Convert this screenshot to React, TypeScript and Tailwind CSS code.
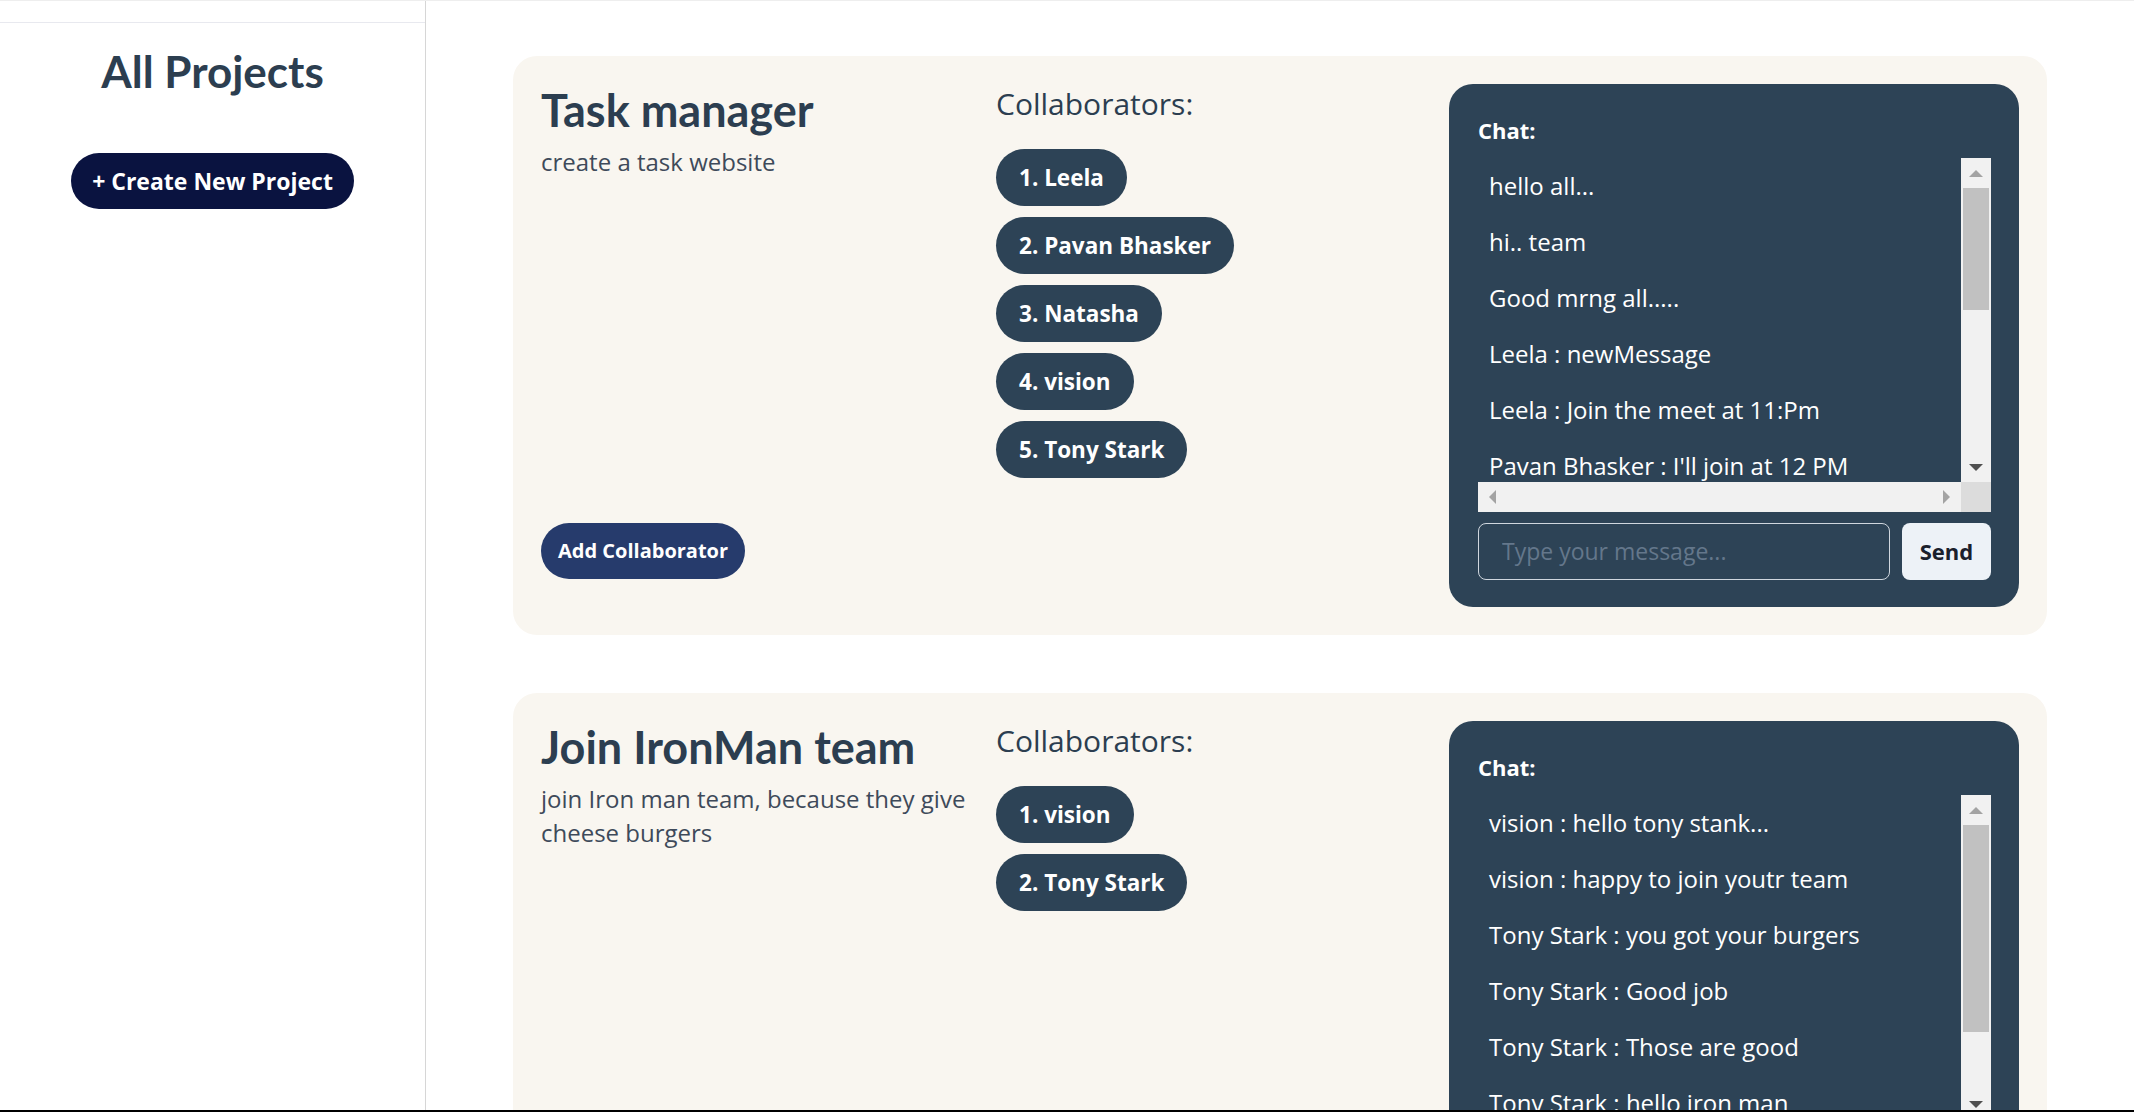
import React from "react";

type Project = {
  title: string;
  desc: string;
  collaborators: string[];
  messages: string[];
  thumbH: number;
};

const projects: Project[] = [
  {
    title: "Task manager",
    desc: "create a task website",
    collaborators: ["Leela", "Pavan Bhasker", "Natasha", "vision", "Tony Stark"],
    messages: [
      "hello all...",
      "hi.. team",
      "Good mrng all.....",
      "Leela : newMessage",
      "Leela : Join the meet at 11:Pm",
      "Pavan Bhasker : I'll join at 12 PM",
      "Natasha : ok",
      "Tony Stark : see you all",
    ],
    thumbH: 122,
  },
  {
    title: "Join IronMan team",
    desc: "join Iron man team, because they give cheese burgers",
    collaborators: ["vision", "Tony Stark"],
    messages: [
      "vision : hello tony stank...",
      "vision : happy to join youtr team",
      "Tony Stark : you got your burgers",
      "Tony Stark : Good job",
      "Tony Stark : Those are good",
      "Tony Stark : hello iron man",
      "vision : thanks",
    ],
    thumbH: 207,
  },
];

function Arrow({ dir, color }: { dir: "up" | "down" | "left" | "right"; color: string }) {
  if (dir === "up")
    return (
      <svg width="14" height="7" viewBox="0 0 14 7">
        <polygon points="7,0 14,7 0,7" fill={color} />
      </svg>
    );
  if (dir === "down")
    return (
      <svg width="14" height="7" viewBox="0 0 14 7">
        <polygon points="0,0 14,0 7,7" fill={color} />
      </svg>
    );
  if (dir === "left")
    return (
      <svg width="7" height="14" viewBox="0 0 7 14">
        <polygon points="7,0 7,14 0,7" fill={color} />
      </svg>
    );
  return (
    <svg width="7" height="14" viewBox="0 0 7 14">
      <polygon points="0,0 7,7 0,14" fill={color} />
    </svg>
  );
}

function ChatBox({ messages, thumbH }: { messages: string[]; thumbH: number }) {
  return (
    <div className="flex w-[570px] shrink-0 flex-col rounded-[24px] bg-[#2d4356] pb-[27px] pl-[29px] pr-[28px] pt-[28px]">
      <div className="mb-[10px] text-[22px] font-bold leading-[36px] text-white">Chat:</div>
      <div className="flex h-[354px] flex-col">
        <div className="flex h-[324px]">
          <div className="min-w-0 flex-1 overflow-hidden">
            {messages.map((m, i) => (
              <div
                key={i}
                className="whitespace-nowrap px-[11px] py-[10px] text-[24px] leading-[36px] text-white"
              >
                {m}
              </div>
            ))}
          </div>
          <div className="flex w-[30px] flex-col bg-[#f1f1f1]">
            <div className="flex h-[30px] items-center justify-center">
              <Arrow dir="up" color="#a3a3a3" />
            </div>
            <div className="flex-1 px-[2px]">
              <div className="bg-[#c1c1c1]" style={{ height: thumbH }} />
            </div>
            <div className="flex h-[30px] items-center justify-center">
              <Arrow dir="down" color="#505050" />
            </div>
          </div>
        </div>
        <div className="flex h-[30px]">
          <div className="flex flex-1 items-center justify-between bg-[#f1f1f1] px-[11px]">
            <Arrow dir="left" color="#a3a3a3" />
            <Arrow dir="right" color="#a3a3a3" />
          </div>
          <div className="w-[30px] bg-[#dcdcdc]" />
        </div>
      </div>
      <div className="mt-[11px] flex h-[57px] gap-[12px]">
        <input
          type="text"
          placeholder="Type your message..."
          className="min-w-0 flex-1 rounded-[8px] border border-[#cfd6de] bg-transparent px-[23px] text-[23px] text-white outline-none placeholder:text-[#64778b]"
        />
        <button className="w-[89px] rounded-[8px] bg-[#edf2f7] text-[22px] font-bold text-[#1a202c]">
          Send
        </button>
      </div>
    </div>
  );
}

function ProjectCard({ p }: { p: Project }) {
  return (
    <div className="flex rounded-[24px] bg-[#f9f6f0] p-[28px]">
      <div className="flex w-[455px] shrink-0 flex-col pr-[10px]">
        <h2 className="font-['Lato',sans-serif] text-[45px] font-bold leading-[53px] text-[#2c3e50]">
          {p.title}
        </h2>
        <p className="mt-[8px] text-[24px] leading-[34px] text-[#3e4a5a]">{p.desc}</p>
        <button className="mb-[28px] mt-auto h-[56px] w-fit rounded-full bg-[#263b6c] px-[17px] text-[20px] font-bold text-white">
          Add Collaborator
        </button>
      </div>
      <div className="min-w-0 flex-1">
        <h3 className="text-[30px] leading-[40px] text-[#2c3e50]">Collaborators:</h3>
        <div className="mt-[25px] flex flex-col items-start gap-[11px]">
          {p.collaborators.map((c, i) => (
            <div
              key={i}
              className="flex h-[57px] items-center rounded-full bg-[#2d4356] px-[23px] text-[22.5px] font-bold text-white"
            >
              {i + 1}. {c}
            </div>
          ))}
        </div>
      </div>
      <ChatBox messages={p.messages} thumbH={p.thumbH} />
    </div>
  );
}

export default function App() {
  return (
    <div className="flex h-[1112px] flex-col overflow-hidden border-t border-[#eeeeee] bg-white font-['Open_Sans',sans-serif]">
      <div className="flex min-h-0 flex-1">
        <aside className="flex w-[426px] shrink-0 flex-col items-center border-r border-[#d6d6d6]">
          <div className="h-[22px] w-full shrink-0 border-b border-[#e8e9ef]" />
          <h1 className="mt-[22px] font-['Lato',sans-serif] text-[44px] font-bold leading-[53px] text-[#2c3e50]">
            All Projects
          </h1>
          <button className="mt-[55px] h-[56px] w-[283px] rounded-full bg-[#0a1340] text-[23px] font-bold text-white">
            + Create New Project
          </button>
        </aside>
        <main className="min-w-0 flex-1 overflow-hidden pt-[55px]">
          <div className="mx-auto flex w-[1534px] flex-col gap-[58px]">
            {projects.map((p, i) => (
              <ProjectCard key={i} p={p} />
            ))}
          </div>
        </main>
      </div>
      <div className="h-[2px] shrink-0 bg-black" />
    </div>
  );
}
